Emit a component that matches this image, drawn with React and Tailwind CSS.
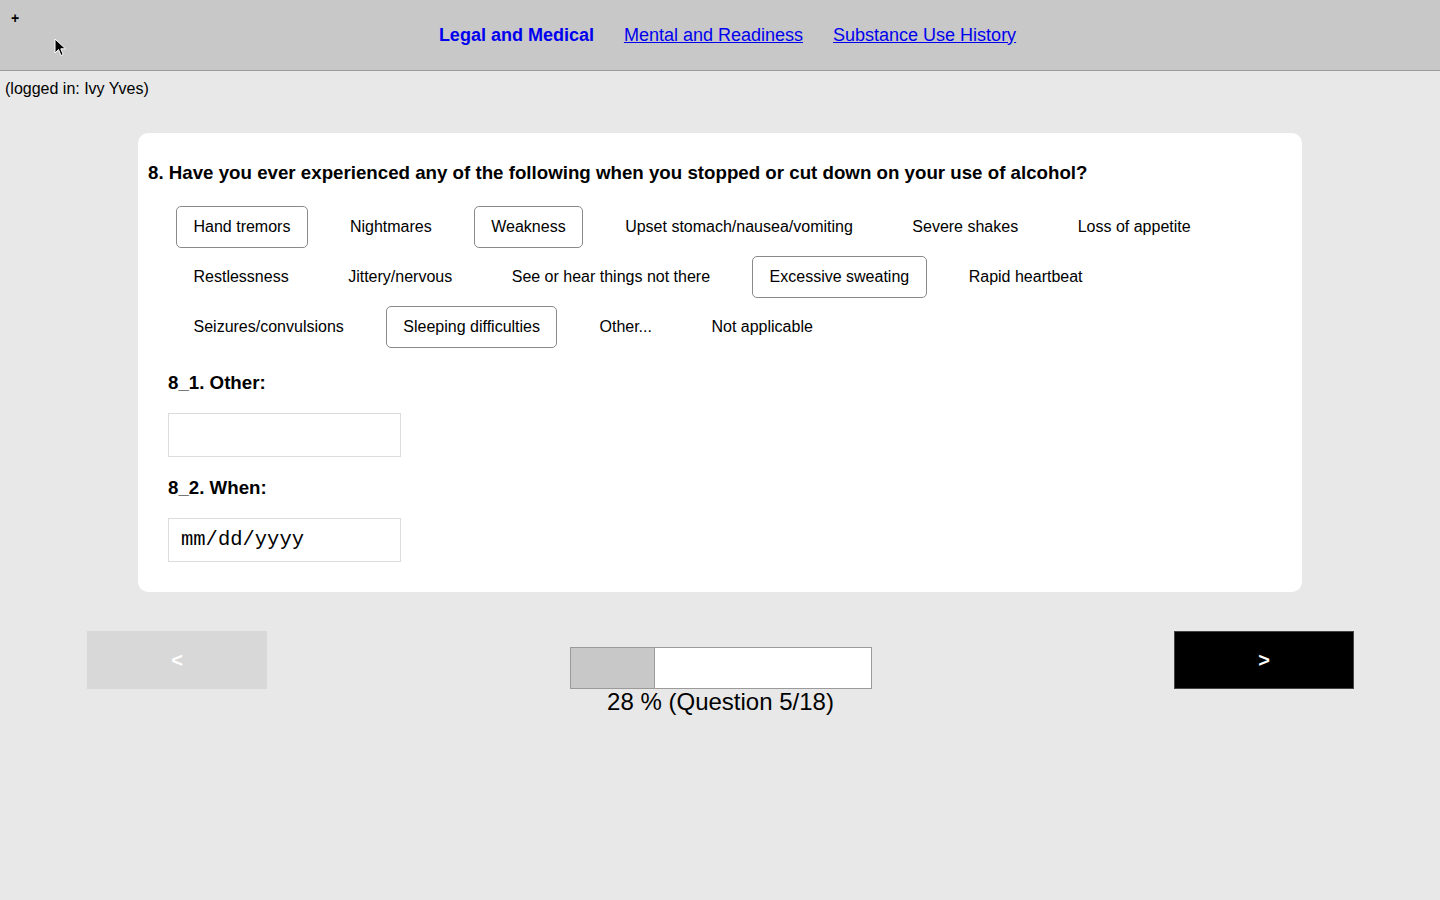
const options = [
  { label: "Hand tremors", selected: true },
  { label: "Nightmares" },
  { label: "Weakness", selected: true },
  { label: "Upset stomach/nausea/vomiting" },
  { label: "Severe shakes" },
  { label: "Loss of appetite" },
  { label: "Restlessness" },
  { label: "Jittery/nervous" },
  { label: "See or hear things not there" },
  { label: "Excessive sweating", selected: true },
  { label: "Rapid heartbeat" },
  { label: "Seizures/convulsions" },
  { label: "Sleeping difficulties", selected: true },
  { label: "Other..." },
  { label: "Not applicable" },
]

function Cursor() {
  return (
    <svg className="absolute left-[54px] top-[38px]" width="13" height="19" viewBox="0 0 13 19">
      <path d="M1 1 L1 15 L4.5 11.5 L7 17.5 L9.2 16.5 L6.8 10.8 L11.5 10.8 Z" fill="#000" stroke="#fff" strokeWidth="1" />
    </svg>
  )
}

export default function App() {
  return (
    <main className="min-h-screen bg-[#e8e8e8] font-['Liberation_Sans',Arial,sans-serif] text-black">
      <header className="relative h-[71px] bg-[#c8c8c8] border-b border-[#9b9b9b] flex items-center justify-center pl-[15px]">
        <span className="absolute left-[11px] top-[8px] text-[14px] font-bold">+</span>
        <Cursor />
        <nav className="flex gap-[30px] text-[18px]">
          <a href="#" className="font-bold text-[#0000ee] no-underline">Legal and Medical</a>
          <a href="#" className="text-[#0000ee] underline">Mental and Readiness</a>
          <a href="#" className="text-[#0000ee] underline">Substance Use History</a>
        </nav>
      </header>

      <p className="mt-[9px] pl-[5px] text-[16px] leading-[18px]">(logged in: Ivy Yves)</p>

      <section className="mx-auto mt-[35px] w-[1164px] rounded-[10px] bg-white px-[10px] pt-[29px] pb-[30px]">
        <h2 className="text-[18.72px] leading-[22px] font-bold">
          8. Have you ever experienced any of the following when you stopped or cut down on your use of alcohol?
        </h2>

        <div className="mx-[28px] mt-[22px] flex flex-wrap gap-x-[24.5px] gap-y-[8px]">
          {options.map((o) => (
            <button
              key={o.label}
              className={
                o.selected
                  ? "h-[42px] px-[16.5px] rounded-[5px] border border-[#8a8a8a] text-[16px]"
                  : "h-[42px] px-[16.5px] rounded-[5px] border border-transparent text-[16px]"
              }
            >
              {o.label}
            </button>
          ))}
        </div>

        <div className="pl-[20px]">
          <label className="mt-[24px] block text-[18.72px] leading-[22px] font-bold">8_1. Other:</label>
          <input type="text" className="mt-[19px] block h-[44px] w-[233px] border border-[#dcdcdc] bg-white px-[12px] outline-none" />

          <label className="mt-[20px] block text-[18.72px] leading-[22px] font-bold">8_2. When:</label>
          <div className="mt-[19px] flex h-[44px] w-[233px] items-center border border-[#dcdcdc] bg-white px-[12px] font-['Liberation_Mono','Courier_New',monospace] text-[20.5px] text-black">
            mm/dd/yyyy
          </div>
        </div>
      </section>

      <div className="mt-[39px] flex items-start justify-between pl-[87px] pr-[86px]">
        <button className="flex h-[58px] w-[180px] items-center justify-center bg-[#d8d8d8] text-[20px] font-bold text-white">
          &lt;
        </button>

        <div className="mt-[16px] flex flex-col items-center">
          <div className="flex h-[42px] w-[302px] border border-[#9a9a9a] bg-white">
            <div className="h-full w-[28%] bg-[#c8c8c8] border-r border-[#9a9a9a]" />
          </div>
          <p className="text-[24px] leading-[26px]">28 % (Question 5/18)</p>
        </div>

        <button className="flex h-[58px] w-[180px] items-center justify-center border border-[#444] bg-black text-[20px] font-bold text-white">
          &gt;
        </button>
      </div>
    </main>
  )
}
